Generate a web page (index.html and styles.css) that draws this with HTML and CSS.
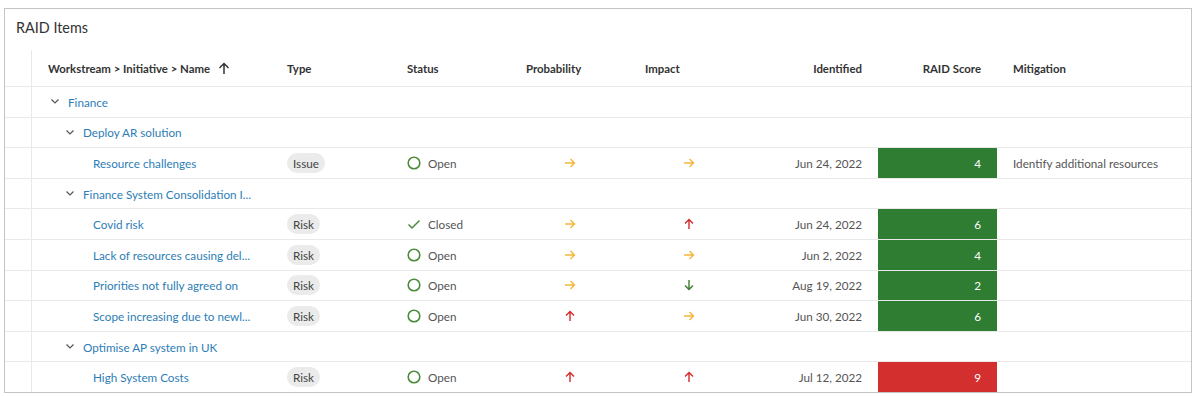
FILE: index.html
```html
<!DOCTYPE html>
<html>
<head>
<meta charset="utf-8">
<link rel="stylesheet" href="styles.css">
</head>
<body>
<div class="card">
  <div class="title">RAID Items</div>
  <div class="grid">
    <div class="row head">
      <div class="gut"></div>
      <div class="c name">Workstream &gt; Initiative &gt; Name
        <svg class="sort" width="12" height="13" viewBox="0 0 12 13"><path d="M6 12V1.5M1.5 6L6 1.5L10.5 6" fill="none" stroke="#333" stroke-width="1.5"/></svg>
      </div>
      <div class="c">Type</div>
      <div class="c">Status</div>
      <div class="c">Probability</div>
      <div class="c">Impact</div>
      <div class="c right">Identified</div>
      <div class="c right">RAID Score</div>
      <div class="c">Mitigation</div>
    </div>

    <div class="row">
      <div class="gut"></div>
      <div class="c name l1"><svg class="chev" width="8" height="5" viewBox="0 0 8 5"><path d="M0.5 0.5L4 4L7.5 0.5" fill="none" stroke="#555" stroke-width="1.2"/></svg><span class="link">Finance</span></div>
      <div class="c"></div><div class="c"></div><div class="c"></div><div class="c"></div><div class="c"></div><div class="c"></div><div class="c"></div>
    </div>

    <div class="row">
      <div class="gut"></div>
      <div class="c name l2"><svg class="chev" width="8" height="5" viewBox="0 0 8 5"><path d="M0.5 0.5L4 4L7.5 0.5" fill="none" stroke="#555" stroke-width="1.2"/></svg><span class="link">Deploy AR solution</span></div>
      <div class="c"></div><div class="c"></div><div class="c"></div><div class="c"></div><div class="c"></div><div class="c"></div><div class="c"></div>
    </div>

    <div class="row">
      <div class="gut"></div>
      <div class="c name l3"><span class="link">Resource challenges</span></div>
      <div class="c"><span class="pill">Issue</span></div>
      <div class="c status"><svg class="ico" width="14" height="14" viewBox="0 0 14 14"><circle cx="7" cy="7" r="5.8" fill="none" stroke="#4b8b3b" stroke-width="1.6"/></svg>Open</div>
      <div class="c center"><svg width="12" height="12" viewBox="0 0 12 12"><path d="M1 6H10.5M6.5 2L10.5 6L6.5 10" fill="none" stroke="#f4b73a" stroke-width="1.4"/></svg></div>
      <div class="c center"><svg width="12" height="12" viewBox="0 0 12 12"><path d="M1 6H10.5M6.5 2L10.5 6L6.5 10" fill="none" stroke="#f4b73a" stroke-width="1.4"/></svg></div>
      <div class="c right">Jun 24, 2022</div>
      <div class="c right score green">4</div>
      <div class="c">Identify additional resources</div>
    </div>

    <div class="row">
      <div class="gut"></div>
      <div class="c name l2"><svg class="chev" width="8" height="5" viewBox="0 0 8 5"><path d="M0.5 0.5L4 4L7.5 0.5" fill="none" stroke="#555" stroke-width="1.2"/></svg><span class="link">Finance System Consolidation I...</span></div>
      <div class="c"></div><div class="c"></div><div class="c"></div><div class="c"></div><div class="c"></div><div class="c"></div><div class="c"></div>
    </div>

    <div class="row">
      <div class="gut"></div>
      <div class="c name l3"><span class="link">Covid risk</span></div>
      <div class="c"><span class="pill">Risk</span></div>
      <div class="c status"><svg class="ico" width="14" height="14" viewBox="0 0 14 14"><path d="M1.5 7.5L5 11L12.5 3.5" fill="none" stroke="#4b8b3b" stroke-width="1.5"/></svg>Closed</div>
      <div class="c center"><svg width="12" height="12" viewBox="0 0 12 12"><path d="M1 6H10.5M6.5 2L10.5 6L6.5 10" fill="none" stroke="#f4b73a" stroke-width="1.4"/></svg></div>
      <div class="c center"><svg width="12" height="12" viewBox="0 0 12 12"><path d="M6 11V1.5M2 5.5L6 1.5L10 5.5" fill="none" stroke="#d42a2a" stroke-width="1.4"/></svg></div>
      <div class="c right">Jun 24, 2022</div>
      <div class="c right score green">6</div>
      <div class="c"></div>
    </div>

    <div class="row">
      <div class="gut"></div>
      <div class="c name l3"><span class="link">Lack of resources causing del...</span></div>
      <div class="c"><span class="pill">Risk</span></div>
      <div class="c status"><svg class="ico" width="14" height="14" viewBox="0 0 14 14"><circle cx="7" cy="7" r="5.8" fill="none" stroke="#4b8b3b" stroke-width="1.6"/></svg>Open</div>
      <div class="c center"><svg width="12" height="12" viewBox="0 0 12 12"><path d="M1 6H10.5M6.5 2L10.5 6L6.5 10" fill="none" stroke="#f4b73a" stroke-width="1.4"/></svg></div>
      <div class="c center"><svg width="12" height="12" viewBox="0 0 12 12"><path d="M1 6H10.5M6.5 2L10.5 6L6.5 10" fill="none" stroke="#f4b73a" stroke-width="1.4"/></svg></div>
      <div class="c right">Jun 2, 2022</div>
      <div class="c right score green">4</div>
      <div class="c"></div>
    </div>

    <div class="row">
      <div class="gut"></div>
      <div class="c name l3"><span class="link">Priorities not fully agreed on</span></div>
      <div class="c"><span class="pill">Risk</span></div>
      <div class="c status"><svg class="ico" width="14" height="14" viewBox="0 0 14 14"><circle cx="7" cy="7" r="5.8" fill="none" stroke="#4b8b3b" stroke-width="1.6"/></svg>Open</div>
      <div class="c center"><svg width="12" height="12" viewBox="0 0 12 12"><path d="M1 6H10.5M6.5 2L10.5 6L6.5 10" fill="none" stroke="#f4b73a" stroke-width="1.4"/></svg></div>
      <div class="c center"><svg width="12" height="12" viewBox="0 0 12 12"><path d="M6 1V10.5M2 6.5L6 10.5L10 6.5" fill="none" stroke="#3a7d2f" stroke-width="1.4"/></svg></div>
      <div class="c right">Aug 19, 2022</div>
      <div class="c right score green">2</div>
      <div class="c"></div>
    </div>

    <div class="row">
      <div class="gut"></div>
      <div class="c name l3"><span class="link">Scope increasing due to newl...</span></div>
      <div class="c"><span class="pill">Risk</span></div>
      <div class="c status"><svg class="ico" width="14" height="14" viewBox="0 0 14 14"><circle cx="7" cy="7" r="5.8" fill="none" stroke="#4b8b3b" stroke-width="1.6"/></svg>Open</div>
      <div class="c center"><svg width="12" height="12" viewBox="0 0 12 12"><path d="M6 11V1.5M2 5.5L6 1.5L10 5.5" fill="none" stroke="#d42a2a" stroke-width="1.4"/></svg></div>
      <div class="c center"><svg width="12" height="12" viewBox="0 0 12 12"><path d="M1 6H10.5M6.5 2L10.5 6L6.5 10" fill="none" stroke="#f4b73a" stroke-width="1.4"/></svg></div>
      <div class="c right">Jun 30, 2022</div>
      <div class="c right score green">6</div>
      <div class="c"></div>
    </div>

    <div class="row">
      <div class="gut"></div>
      <div class="c name l2"><svg class="chev" width="8" height="5" viewBox="0 0 8 5"><path d="M0.5 0.5L4 4L7.5 0.5" fill="none" stroke="#555" stroke-width="1.2"/></svg><span class="link">Optimise AP system in UK</span></div>
      <div class="c"></div><div class="c"></div><div class="c"></div><div class="c"></div><div class="c"></div><div class="c"></div><div class="c"></div>
    </div>

    <div class="row">
      <div class="gut"></div>
      <div class="c name l3"><span class="link">High System Costs</span></div>
      <div class="c"><span class="pill">Risk</span></div>
      <div class="c status"><svg class="ico" width="14" height="14" viewBox="0 0 14 14"><circle cx="7" cy="7" r="5.8" fill="none" stroke="#4b8b3b" stroke-width="1.6"/></svg>Open</div>
      <div class="c center"><svg width="12" height="12" viewBox="0 0 12 12"><path d="M6 11V1.5M2 5.5L6 1.5L10 5.5" fill="none" stroke="#d42a2a" stroke-width="1.4"/></svg></div>
      <div class="c center"><svg width="12" height="12" viewBox="0 0 12 12"><path d="M6 11V1.5M2 5.5L6 1.5L10 5.5" fill="none" stroke="#d42a2a" stroke-width="1.4"/></svg></div>
      <div class="c right">Jul 12, 2022</div>
      <div class="c right score red">9</div>
      <div class="c"></div>
    </div>
  </div>
</div>
</body>
</html>
```

FILE: styles.css
```css
* { box-sizing: border-box; }
html, body { margin: 0; padding: 0; background: #fff; }
body {
  font-family: Lato, "Open Sans", sans-serif;
  font-size: 11.7px;
  color: #555;
}
.card {
  margin: 8px 0 0 4px;
  width: 1188px;
  height: 385px;
  border: 1px solid #c4c4c4;
  overflow: hidden;
}
.title {
  height: 41px;
  padding: 10px 0 0 11px;
  font-size: 14.4px;
  color: #333;
}
.grid { display: flex; flex-direction: column; }
.row {
  display: grid;
  grid-template-columns: 27px 239px 120px 119px 119px 119px 130px 119px 1fr;
  height: 30.6px;
  border-bottom: 1px solid #e9e9e9;
}
.row.head {
  height: 37px;
  font-weight: 700;
  font-size: 11.4px;
  color: #333;
}
.gut { border-right: 1px solid #e9e9e9; }
.c {
  display: flex;
  align-items: center;
  padding: 0 16px;
  white-space: nowrap;
  overflow: hidden;
}
.c.right { justify-content: flex-end; }
.c.center { justify-content: center; }
.sort { margin-left: 8px; }
.l1 { padding-left: 19px; }
.l2 { padding-left: 34px; }
.l3 { padding-left: 61px; }
.chev { margin-right: 9px; flex: none; }
.link { color: #2d7db6; }
.pill {
  display: inline-block;
  background: #ebebeb;
  border-radius: 10px;
  height: 20px;
  line-height: 20px;
  padding: 0 6px;
  color: #444;
}
.status .ico { margin-right: 7px; flex: none; }
.score { color: #fff; }
.score.green { background: #2e7d32; }
.score.red { background: #d32f2f; }
```
